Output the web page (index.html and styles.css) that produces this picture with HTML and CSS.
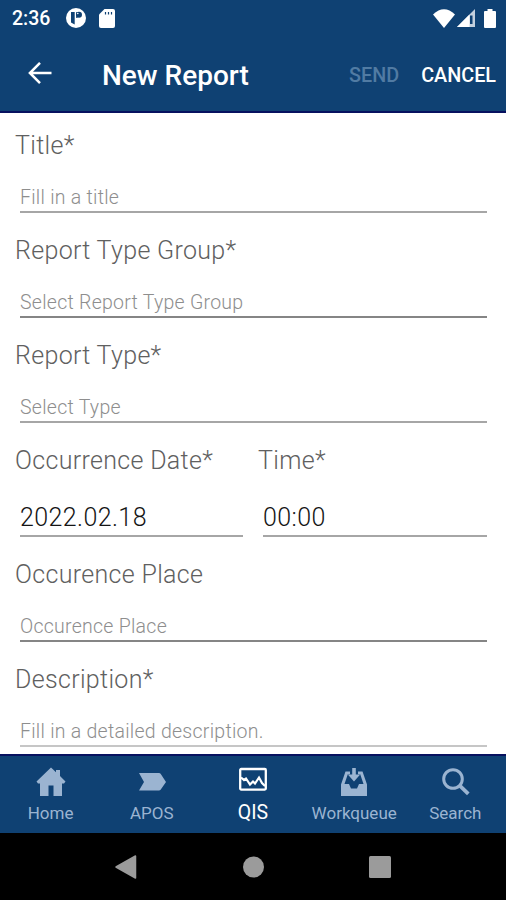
FILE: index.html
```html
<!DOCTYPE html>
<html lang="en">
<head>
<meta charset="utf-8">
<title>New Report</title>
<link rel="stylesheet" href="styles.css">
</head>
<body>
<header class="top">
  <div class="status">
    <span class="clock">2:36</span>
    <svg width="20" height="20" viewBox="0 0 20 20"><circle cx="10" cy="10" r="10" fill="#fff"/><path d="M5 4h3.700v12.500L5 14.500z" fill="#0f4173"/><circle cx="13" cy="6.800" r="3" fill="#0f4173"/><path d="M10.200 4h1.300v6h-1.300z" fill="#0f4173"/><circle cx="11.800" cy="5.500" r=".8" fill="#fff"/></svg>
    <svg class="s-card" width="16" height="19" viewBox="0 0 16 19"><path d="M5.500 0H14a2 2 0 0 1 2 2v15a2 2 0 0 1-2 2H2a2 2 0 0 1-2-2V5.500z" fill="#fff"/><path d="M6.500 3v2.500M9.500 3v2.500M12.500 3v2.500" stroke="#0f4173" stroke-width="1.200"/></svg>
    <span class="grow"></span>
    <svg width="22" height="19" viewBox="0 0 22 19"><path d="M0 5.500Q11-5 22 5.500L11 19z" fill="#fff"/></svg>
    <svg class="s-cell" width="18" height="18" viewBox="0 0 18 18"><path d="M18 0v18H0z" fill="#c4d0de"/><path d="M12.500 5.500V18H0z" fill="#fff"/><path d="M13 6.500h2.500v8.500H13z" fill="#0f4173"/></svg>
    <svg class="s-batt" width="12" height="19" viewBox="0 0 12 19"><path d="M3.500 0h5v2H11a1 1 0 0 1 1 1v15a1 1 0 0 1-1 1H1a1 1 0 0 1-1-1V3a1 1 0 0 1 1-1h2.500z" fill="#fff"/></svg>
  </div>
  <div class="bar">
    <svg class="back" width="24" height="22" viewBox="0 0 24 22" fill="none" stroke="#fff" stroke-width="2.500"><path d="M23.500 11H2M12 .9L1.900 11 12 21.100"/></svg>
    <h1>New Report</h1>
    <span class="grow"></span>
    <span class="action off">SEND</span>
    <span class="action">CANCEL</span>
  </div>
</header>
<main class="form">
  <div class="field"><div class="label">Title*</div><div class="input">Fill in a title</div></div>
  <div class="field"><div class="label">Report Type Group*</div><div class="input dark">Select Report Type Group</div></div>
  <div class="field"><div class="label">Report Type*</div><div class="input">Select Type</div></div>
  <div class="pair">
    <div class="field"><div class="label">Occurrence Date*</div><div class="input value">2022.02.18</div></div>
    <div class="field"><div class="label">Time*</div><div class="input value">00:00</div></div>
  </div>
  <div class="field"><div class="label">Occurence Place</div><div class="input dark">Occurence Place</div></div>
  <div class="field"><div class="label">Description*</div><div class="input last">Fill in a detailed description.</div></div>
</main>
<nav class="tabs">
  <div class="tab"><svg width="30" height="30" viewBox="0 0 30 30"><path d="M15 .5l5 4.700V3h4v6l5.500 5.500-1.500 2H26V29h-8.500V18.500h-5V29H4V16.500H2L.5 14.500z" fill="currentColor"/></svg><span>Home</span></div>
  <div class="tab"><svg width="30" height="30" viewBox="0 0 30 30"><path d="M2 6h20q1 0 1.600.8L29 15l-5.400 7.700q-.6.800-1.600.8H2L7 15z" fill="currentColor"/></svg><span>APOS</span></div>
  <div class="tab active"><svg width="30" height="30" viewBox="0 0 30 30" fill="none" stroke="currentColor" stroke-width="2.300"><rect x="2.200" y="2" width="25.600" height="20.600" rx="1"/><path d="M3 10.500l3 2.500 2-1.500 4 6 3-3 2 2L21 10.500l3 5.500 3 3" stroke-width="2.200"/></svg><span>QIS</span></div>
  <div class="tab"><svg width="30" height="30" viewBox="0 0 30 30" fill="currentColor"><path d="M6.500 4.500H11v2.800H8.800L5.500 17H10l2 4.500h6l2-4.500h4.500L21.200 7.300H19V4.500h4.500L28 17.500V29H2V17.500z"/><path d="M13.200 1h3.600v6.500h4.400L15 14.500l-6.200-7h4.400z"/></svg><span>Workqueue</span></div>
  <div class="tab"><svg width="30" height="30" viewBox="0 0 30 30" fill="none" stroke="currentColor"><circle cx="13" cy="12" r="9.300" stroke-width="3"/><path d="M19.500 18.300l8.800 8.500" stroke-width="3.700"/></svg><span>Search</span></div>
</nav>
<footer class="system">
  <svg width="22" height="24" viewBox="0 0 22 24"><path d="M20.500 1v22L1 12z" fill="#9b9b9b" stroke="#9b9b9b" stroke-width="1.500" stroke-linejoin="round"/></svg>
  <svg width="22" height="22" viewBox="0 0 22 22"><circle cx="11.500" cy="11" r="10.500" fill="#9b9b9b"/></svg>
  <svg width="22" height="22" viewBox="0 0 22 22"><rect width="22" height="22" rx="1.500" fill="#9b9b9b"/></svg>
</footer>
</body>
</html>
```

FILE: styles.css
```css
* { box-sizing: border-box; }
body { margin: 0; width: 506px; height: 900px; display: flex; flex-direction: column; overflow: hidden; background: #fff; font-family: Roboto, "Liberation Sans", sans-serif; }
svg { display: block; flex: none; }
.grow { flex: 1; }
.top { height: 113px; flex: none; background: #0f4173; border-bottom: 2px solid #07115f; color: #fff; }
.status { height: 36px; display: flex; align-items: center; padding: 0 10px 0 12px; }
.clock { width: 54px; font-size: 19.5px; font-weight: 500; }
.s-card { margin-left: 13px; }
.s-cell { margin-left: 2px; }
.s-batt { margin-left: 9px; }
.bar { height: 77px; display: flex; align-items: center; padding: 0 10px 0 28px; }
.back { margin-top: -3px; }
h1 { margin: 2px 0 0 50px; font-size: 28px; line-height: 32px; font-weight: 500; white-space: nowrap; }
.action { margin: 1px 0 0 22px; font-size: 19.8px; font-weight: 500; }
.off { color: #517ba3; }
.form { flex: 1; min-height: 0; padding: 18px 19px 0 15px; display: flex; flex-direction: column; gap: 23px; }
.field { flex: none; }
.label { height: 30px; line-height: 30px; font-size: 25px; font-weight: 350; letter-spacing: .32px; color: #606060; white-space: nowrap; }
.input { height: 52px; margin-left: 5px; padding-top: 24px; line-height: 25px; font-size: 19.5px; font-weight: 350; letter-spacing: .26px; color: #8e8e8e; border-bottom: 2px solid #a6a6a6; white-space: nowrap; }
.dark { border-color: #858585; }
.value { height: 61px; padding-top: 27px; line-height: 30px; font-size: 25px; letter-spacing: .4px; color: #151515; }
.last { border-color: #c6c6c6; }
.pair { display: grid; grid-template-columns: 228px 229px; column-gap: 15px; }
.tabs { height: 79px; flex: none; display: grid; grid-template-columns: repeat(5, 1fr); background: #0f4173; border-top: 2px solid #07115f; color: #9bb4d1; }
.tab { display: flex; flex-direction: column; align-items: center; padding-top: 11px; gap: 4px; font-size: 17px; line-height: 24px; }
.active { color: #fff; font-size: 19.5px; }
.system { height: 67px; flex: none; display: flex; justify-content: center; align-items: center; gap: 105px; background: #000; }
```
